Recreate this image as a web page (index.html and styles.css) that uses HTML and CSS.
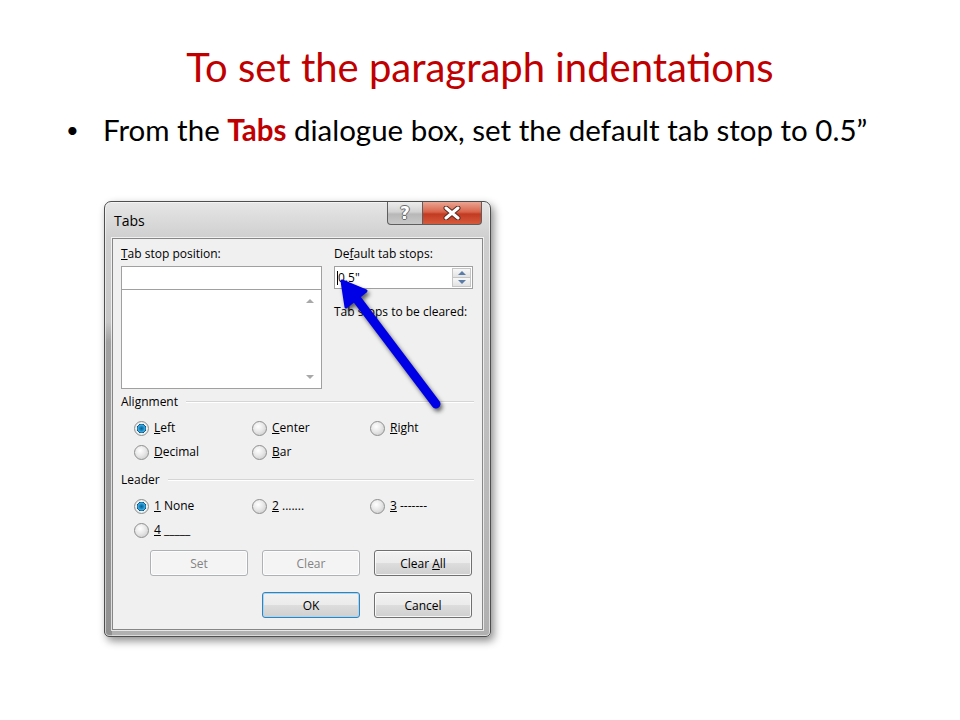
FILE: index.html
```html
<!DOCTYPE html>
<html>
<head>
  <title>To set the paragraph indentations</title>
  <link rel="stylesheet" href="styles.css">
</head>
<body>
  <div class="slide">
    <h1 class="title">To set the paragraph indentations</h1>
    <div class="points">
      <div class="point"><span class="bullet">&#8226;</span><span>From the <b class="hl">Tabs</b> dialogue box, set the default tab stop to 0.5&#8221;</span></div>
    </div>

    <div class="window">
      <div class="titlebar">
        <span class="caption">Tabs</span>
        <div class="caption-btns">
          <span class="btn-help">?</span>
          <span class="btn-close">
            <svg width="20" height="14" viewBox="0 0 20 14">
              <path d="M4 2 L16 12 M16 2 L4 12" stroke="#5a2a20" stroke-width="5" stroke-linecap="round"/>
              <path d="M4 2 L16 12 M16 2 L4 12" stroke="#fff" stroke-width="3" stroke-linecap="round"/>
            </svg>
          </span>
        </div>
      </div>

      <div class="client">
        <div class="top">
          <div class="col">
            <div class="lbl"><u>T</u>ab stop position:</div>
            <div class="textbox"></div>
            <div class="listbox">
              <span class="arr up"></span>
              <span class="arr down"></span>
            </div>
          </div>
          <div class="col">
            <div class="lbl">De<u>f</u>ault tab stops:</div>
            <div class="spin">
              <span class="caret"></span>0.5"
              <div class="spin-btns">
                <span class="sb"><i class="tri up"></i></span>
                <span class="sb"><i class="tri down"></i></span>
              </div>
            </div>
            <div class="lbl cleared">Tab stops to be cleared:</div>
          </div>
        </div>

        <div class="group-head first"><span>Alignment</span><i class="rule"></i></div>
        <div class="radios">
          <label class="radio on"><span class="dot"></span><span><u>L</u>eft</span></label>
          <label class="radio"><span class="dot"></span><span><u>C</u>enter</span></label>
          <label class="radio"><span class="dot"></span><span><u>R</u>ight</span></label>
          <label class="radio"><span class="dot"></span><span><u>D</u>ecimal</span></label>
          <label class="radio"><span class="dot"></span><span><u>B</u>ar</span></label>
        </div>

        <div class="group-head"><span>Leader</span><i class="rule"></i></div>
        <div class="radios">
          <label class="radio on"><span class="dot"></span><span><u>1</u> None</span></label>
          <label class="radio"><span class="dot"></span><span><u>2</u> .......</span></label>
          <label class="radio"><span class="dot"></span><span><u>3</u> -------</span></label>
          <label class="radio"><span class="dot"></span><span><u>4</u> _____</span></label>
        </div>

        <div class="buttons">
          <span class="btn disabled">Set</span>
          <span class="btn disabled">Clear</span>
          <span class="btn"><span>Clear <u>A</u>ll</span></span>
        </div>
        <div class="buttons second">
          <span class="btn ghost"></span>
          <span class="btn focus">OK</span>
          <span class="btn">Cancel</span>
        </div>
      </div>

      <svg class="pointer" width="387" height="436" viewBox="0 0 387 436">
        <path d="M332 203 L252 97" stroke="#0000e6" stroke-width="9" stroke-linecap="round"/>
        <path d="M238 80 L262 90 L242 106 Z" fill="#0000e6" stroke="#0000e6" stroke-width="3" stroke-linejoin="round"/>
      </svg>
    </div>
  </div>
</body>
</html>
```

FILE: styles.css
```css
body {
  margin: 0;
  background-color: #fff;
}

.slide {
  width: 960px;
  height: 720px;
  overflow: hidden;
  font-family: Lato, "Open Sans", sans-serif;
}

.title {
  margin: 0;
  padding-top: 43px;
  text-align: center;
  font-size: 40px;
  font-weight: normal;
  line-height: 48px;
  color: #c00000;
}

.points {
  margin-top: 21px;
  font-size: 29.5px;
  line-height: 36px;
  color: #000;
}

.point {
  display: flex;
}

.bullet {
  width: 37px;
  margin-left: 66px;
  font-size: 22px;
}

.hl {
  color: #c00000;
}

/* dialog window */
.window {
  position: relative;
  box-sizing: border-box;
  width: 387px;
  height: 436px;
  margin: 53px 0 0 104px;
  padding: 0 7px 6px 7px;
  border: 1px solid #4e4e4e;
  border-radius: 7px 7px 5px 5px;
  background:
    linear-gradient(to bottom, transparent 120px, rgba(0, 0, 0, 0.18) 140px) left / 7px 100% no-repeat,
    linear-gradient(to bottom, #e6e6e6 0, #cfcfcf 36px, #c4c4c4 140px, #b0b0b0 100%);
  box-shadow: inset 0 0 0 1px rgba(255, 255, 255, 0.55), 3px 4px 8px rgba(0, 0, 0, 0.45);
  font-family: "Open Sans", "Noto Sans", sans-serif;
  font-size: 12px;
  color: #000;
}

.titlebar {
  display: flex;
  justify-content: space-between;
  align-items: flex-start;
  height: 36px;
}

.caption {
  margin: 10px 0 0 2px;
  font-size: 14px;
  line-height: 18px;
}

.caption-btns {
  display: flex;
  margin-right: 1px;
}

.btn-help,
.btn-close {
  display: flex;
  align-items: center;
  justify-content: center;
  height: 22px;
  border: 1px solid #5e5e5e;
  border-top: none;
}

.btn-help {
  width: 34px;
  border-radius: 0 0 0 4px;
  background: linear-gradient(to bottom, #ececec 0, #d2d2d2 45%, #b8b8b8 55%, #c8c8c8 100%);
  font-family: "DejaVu Sans", sans-serif;
  font-size: 17px;
  font-weight: bold;
  color: #fff;
  text-shadow: 1px 0 0 #6a6a6a, -1px 0 0 #6a6a6a, 0 1px 0 #6a6a6a, 0 -1px 0 #6a6a6a;
}

.btn-close {
  width: 58px;
  border-left: none;
  border-radius: 0 0 4px 0;
  background: linear-gradient(to bottom, #eaa593 0, #d9644a 45%, #c23a22 55%, #d65a3c 100%);
}

.client {
  box-sizing: border-box;
  height: 392px;
  padding: 7px 8px 0 8px;
  border: 1px solid #868686;
  background-color: #f0f0f0;
  box-shadow: 0 0 0 1px rgba(255, 255, 255, 0.7);
}

.top {
  display: grid;
  grid-template-columns: 201px 139px;
  column-gap: 12px;
}

.lbl {
  line-height: 16px;
  margin-bottom: 4px;
}

.lbl.cleared {
  margin-top: 15px;
}

.textbox {
  box-sizing: border-box;
  height: 24px;
  border: 1px solid #a0a0a0;
  background-color: #fff;
}

.listbox {
  position: relative;
  box-sizing: border-box;
  height: 100px;
  margin-top: -1px;
  border: 1px solid #a0a0a0;
  background-color: #fff;
}

.arr {
  position: absolute;
  right: 7px;
  width: 0;
  height: 0;
  border-left: 4px solid transparent;
  border-right: 4px solid transparent;
}

.arr.up {
  top: 9px;
  border-bottom: 4px solid #a8a8a8;
}

.arr.down {
  bottom: 9px;
  border-top: 4px solid #a8a8a8;
}

.spin {
  position: relative;
  box-sizing: border-box;
  display: flex;
  align-items: center;
  height: 23px;
  padding-left: 2px;
  border: 1px solid #a0a0a0;
  background-color: #fff;
}

.caret {
  width: 1px;
  height: 14px;
  background-color: #000;
}

.spin-btns {
  position: absolute;
  top: 1px;
  right: 1px;
  display: flex;
  flex-direction: column;
}

.sb {
  display: flex;
  align-items: center;
  justify-content: center;
  box-sizing: border-box;
  width: 19px;
  height: 10px;
  border: 1px solid #c5c5c5;
  background: linear-gradient(to bottom, #f8f8f8, #e2e2e2);
}

.sb + .sb {
  margin-top: -1px;
}

.tri {
  width: 0;
  height: 0;
  border-left: 4px solid transparent;
  border-right: 4px solid transparent;
}

.tri.up {
  border-bottom: 4px solid #5a7ca6;
}

.tri.down {
  border-top: 4px solid #5a7ca6;
}

.group-head {
  display: flex;
  align-items: center;
  line-height: 16px;
  margin-top: 12px;
}

.group-head.first {
  margin-top: 5px;
}

.rule {
  flex: 1;
  margin-left: 8px;
  border-top: 1px solid #d5d5d5;
  border-bottom: 1px solid #fff;
}

.radios {
  display: grid;
  grid-template-columns: 118px 118px 118px;
  row-gap: 8px;
  margin: 10px 0 0 13px;
}

.radio {
  display: flex;
  align-items: center;
  line-height: 16px;
}

.dot {
  box-sizing: border-box;
  width: 15px;
  height: 15px;
  margin-right: 5px;
  border: 1px solid #8e8f8f;
  border-radius: 50%;
  background: radial-gradient(circle at 40% 35%, #ffffff 0, #e8e8e8 45%, #c4c4c4 100%);
}

.radio.on .dot {
  background: radial-gradient(circle at 50% 50%, #0a5f8c 0, #1a86c0 2px, #3cb0e8 3.5px, #0d4f7a 4.5px, #f2f2f2 5px, #d8d8d8 100%);
}

.buttons {
  display: flex;
  gap: 14px;
  margin: 12px 0 0 29px;
}

.buttons.second {
  margin-top: 16px;
}

.btn {
  box-sizing: border-box;
  display: flex;
  align-items: center;
  justify-content: center;
  width: 98px;
  height: 26px;
  border: 1px solid #707070;
  border-radius: 3px;
  background: linear-gradient(to bottom, #f2f2f2 0, #ebebeb 50%, #dddddd 51%, #cfcfcf 100%);
  box-shadow: inset 0 0 0 1px rgba(255, 255, 255, 0.8);
}

.btn.disabled {
  border-color: #adb2b5;
  background: #f4f4f4;
  color: #838383;
}

.btn.focus {
  border-color: #3c7fb1;
  box-shadow: inset 0 0 0 1px #9fd9f7;
}

.btn.ghost {
  visibility: hidden;
}

.pointer {
  position: absolute;
  top: -1px;
  left: -1px;
  pointer-events: none;
  filter: drop-shadow(2px 3px 2px rgba(0, 0, 0, 0.6));
}
```
